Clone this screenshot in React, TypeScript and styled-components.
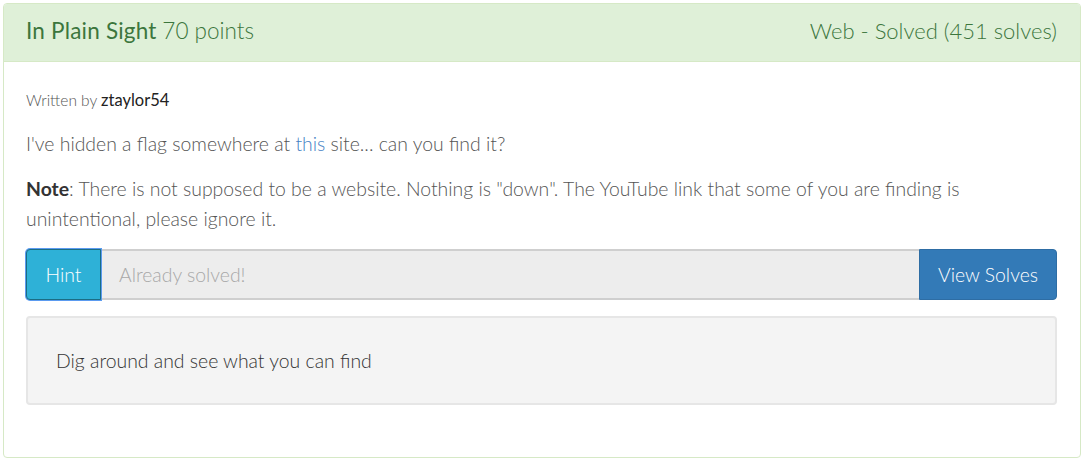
import React from "react";
import styled, { createGlobalStyle } from "styled-components";

const Global = createGlobalStyle`
  html, body { margin: 0; padding: 0; background: #fff; }
  body { font-family: Lato, "Open Sans", sans-serif; }
  * { box-sizing: border-box; }
`;

const Page = styled.div`
  padding: 3px 3px;
  width: 1084px;
`;

const Panel = styled.div`
  border: 1px solid #d6e9c6;
  border-radius: 4px;
  background: #fff;
  height: 455px;
  display: flex;
  flex-direction: column;
`;

const Header = styled.div`
  background: #dff0d8;
  border-bottom: 1px solid #d6e9c6;
  border-radius: 3px 3px 0 0;
  height: 58px;
  padding: 0 23px 4px 22px;
  display: flex;
  align-items: center;
  justify-content: space-between;
  color: #3c763d;
  font-size: 22.5px;
`;

const Title = styled.span`
  font-weight: 400;
  letter-spacing: 0.2px;
`;

const Light = styled.span<{ $size?: number }>`
  font-weight: 300;
  font-size: ${(p) => (p.$size ? `${p.$size}px` : "inherit")};
`;

const Body = styled.div`
  padding: 28px 23px 0 22px;
  display: flex;
  flex-direction: column;
`;

const Byline = styled.div`
  font-size: 15.5px;
  font-weight: 300;
  color: #555;
  line-height: 20px;
  margin-bottom: 19px;
`;

const Author = styled.span`
  font-weight: 400;
  font-size: 16.5px;
  color: #222;
`;

const Para = styled.p`
  margin: 0 0 15px;
  font-size: 19.4px;
  font-weight: 300;
  line-height: 30px;
  color: #555;
`;

const Link = styled.a`
  color: #4582c4;
  text-decoration: none;
`;

const Strong = styled.b`
  font-weight: 700;
  color: #333;
`;

const InputGroup = styled.div`
  display: flex;
  height: 51px;
`;

const HintButton = styled.button`
  width: 75px;
  background: #2eb1d7;
  color: #fff;
  font-family: inherit;
  font-size: 19.4px;
  font-weight: 300;
  border: 1px solid #1b6d85;
  border-radius: 4px 0 0 4px;
  box-shadow: 0 0 0 1px #5b9bf0;
  position: relative;
  z-index: 1;
`;

const Field = styled.div`
  flex: 1;
  background: #ededed;
  border-top: 2px solid #cfcfcf;
  border-bottom: 2px solid #cfcfcf;
  display: flex;
  align-items: center;
  padding-left: 18px;
  font-size: 19.4px;
  font-weight: 300;
  color: #a8a8a8;
`;

const SolvesButton = styled.button`
  width: 138px;
  background: #337ab7;
  color: #fff;
  font-family: inherit;
  font-size: 19.4px;
  font-weight: 300;
  border: 1px solid #2e6da4;
  border-radius: 0 4px 4px 0;
`;

const Well = styled.div`
  margin-top: 16px;
  height: 89px;
  background: #f4f4f4;
  border: 2px solid #e6e6e6;
  border-radius: 4px;
  display: flex;
  align-items: center;
  padding-left: 28px;
  font-size: 19.4px;
  font-weight: 300;
  color: #333;
`;

export default function App() {
  return (
    <>
      <Global />
      <Page>
        <Panel>
          <Header>
            <span>
              <Title>In Plain Sight</Title> <Light>70 points</Light>
            </span>
            <Light $size={22}>Web - Solved (451 solves)</Light>
          </Header>
          <Body>
            <Byline>
              Written by <Author>ztaylor54</Author>
            </Byline>
            <Para>
              I've hidden a flag somewhere at <Link href="#">this</Link> site... can you find it?
            </Para>
            <Para>
              <Strong>Note</Strong>: There is not supposed to be a website. Nothing is "down". The YouTube link that some of you are finding is unintentional, please ignore it.
            </Para>
            <InputGroup>
              <HintButton>Hint</HintButton>
              <Field>Already solved!</Field>
              <SolvesButton>View Solves</SolvesButton>
            </InputGroup>
            <Well>Dig around and see what you can find</Well>
          </Body>
        </Panel>
      </Page>
    </>
  );
}
